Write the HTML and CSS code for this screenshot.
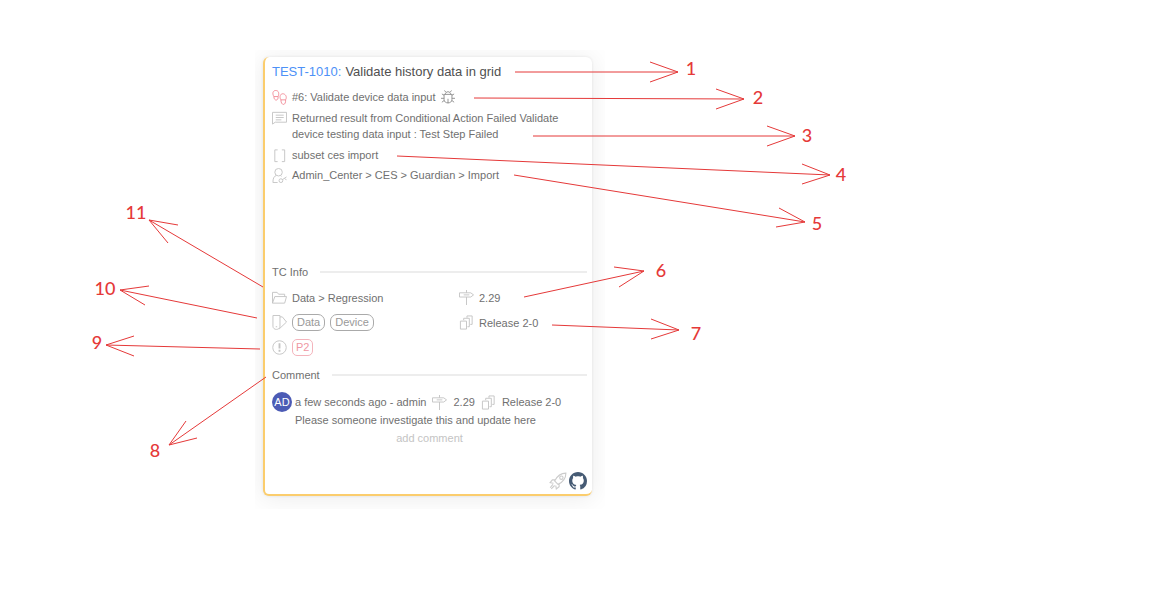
FILE: index.html
```html
<!DOCTYPE html>
<html lang="en">
<head>
<meta charset="utf-8">
<meta name="viewport" content="width=device-width, initial-scale=1">
<title>Test result card</title>
<link rel="stylesheet" href="styles.css">
</head>
<body>
<svg class="symbols" aria-hidden="true">
  <symbol id="sign" viewBox="0 0 16 16"><path d="M8 0v3M8 7.500V16M.5 3h12l3 2.200-3 2.300H.5z M5 5.200h6"/></symbol>
  <symbol id="copies" viewBox="0 0 16 16"><path d="M1.500 6.500h6.500v8.500h-6.500zM5 5.500v-2h6v9H9M8.500 3V1h5.500v9h-2"/></symbol>
</svg>
<main class="figure">
  <div class="stage">
    <article class="card">
      <h1 class="title"><a href="#test-1010">TEST-1010:</a><span>Validate history data in grid</span></h1>
      <section class="details">
        <div class="row">
          <svg class="icon danger" viewBox="0 0 16 16"><path d="M2 7C0 3.500 1 .5 4 .5s4 3 2.500 6.500zM2 7c0 5 5 5 4.500 0M9.500 10.500C7.500 7 9 4 11.500 4s5 3 3 6.500zM9.500 10.500c0 6.500 5.500 6.500 5 0"/></svg>
          <span>#6: Validate device data input</span>
          <svg class="icon bug" viewBox="0 0 16 16"><path d="M3.500 5h9v6c0 5-9 5-9 0zM5 5c0-4 6-4 6 0M5.500 2.500L4 .5M10.500 2.500L12 .5M8 10v5M3.500 6L1 4.500M12.500 6L15 4.500M3.500 9.500H0M12.500 9.500H16M3.500 12L1 14M12.500 12l2.500 2"/></svg>
        </div>
        <div class="row message">
          <svg class="icon" viewBox="0 0 16 16"><path d="M.5 2.500h15v10.500H3.500L.5 15zM4 5.500h8.500M4 8h8.500M4 10.500h6"/></svg>
          <p>Returned result from Conditional Action Failed Validate device testing data input : Test Step Failed</p>
        </div>
        <div class="row">
          <svg class="icon" viewBox="0 0 16 16"><path d="M6 2H3v12.500h3M10.500 2h3v12.500h-3"/></svg>
          <span>subset ces import</span>
        </div>
        <div class="row">
          <svg class="icon" viewBox="0 0 16 16"><circle cx="7" cy="4.500" r="4"/><path d="M4.500 8C2 9 1 11 1 15.500h5M9 8l1 1"/><circle cx="9.500" cy="13.500" r="2"/><path d="M11 12.500l4.500-3M13.500 11l2 2"/></svg>
          <span>Admin_Center &gt; CES &gt; Guardian &gt; Import</span>
        </div>
      </section>
      <h2 class="heading">TC Info</h2>
      <section class="info">
        <div class="column">
          <div class="row">
            <svg class="icon" viewBox="0 0 16 16"><path d="M.5 14V2.500h5l1.500 2h6.500V7M.5 14L3 7h12.500l-2 7z"/></svg>
            <span>Data &gt; Regression</span>
          </div>
          <div class="row">
            <svg class="icon" viewBox="0 0 16 16"><path d="M1 .5h7.500V12c0 4.500-7.500 4.500-7.500 0zM8.500 2h2.500l4.500 5.500-8 7.500M4 12.500h1.500"/></svg>
            <span class="tag">Data</span><span class="tag">Device</span>
          </div>
          <div class="row">
            <svg class="icon strong" viewBox="0 0 16 16"><circle cx="8" cy="8" r="7.200"/><path class="mark" d="M8 3.500v5.500M8 10.500v2"/></svg>
            <span class="tag priority">P2</span>
          </div>
        </div>
        <div class="column">
          <div class="row"><svg class="icon"><use href="#sign"/></svg><span>2.29</span></div>
          <div class="row"><svg class="icon"><use href="#copies"/></svg><span>Release 2-0</span></div>
        </div>
      </section>
      <h2 class="heading">Comment</h2>
      <section class="comment">
        <span class="avatar">AD</span>
        <div class="body">
          <div class="meta"><span>a few seconds ago - admin</span><svg class="icon"><use href="#sign"/></svg><span>2.29</span><svg class="icon"><use href="#copies"/></svg><span>Release 2-0</span></div>
          <p>Please someone investigate this and update here</p>
        </div>
      </section>
      <button class="add" type="button">add comment</button>
      <footer class="actions">
        <button type="button" aria-label="Run"><svg class="rocket" viewBox="0 0 16 16"><path d="M5 8c2-4 5-7 10-7 0 5-3 8-7 10zM5.500 7H3L1 9.500l3 .5M9 10.500V13l-2.500 2L6 12M3.500 11L1 14M5 12l-3 3"/><circle cx="11" cy="5" r="1.500"/></svg></button>
        <button type="button" aria-label="GitHub"><svg class="github" viewBox="0 0 16 16"><path d="M8 0C3.580 0 0 3.580 0 8c0 3.540 2.290 6.530 5.470 7.590.4.070.55-.17.55-.38 0-.19-.01-.82-.01-1.490-2.010.37-2.530-.49-2.690-.94-.09-.23-.48-.94-.82-1.130-.28-.15-.68-.52-.01-.53.63-.01 1.080.58 1.230.82.72 1.210 1.870.87 2.330.66.07-.52.28-.87.51-1.070-1.780-.2-3.640-.89-3.640-3.950 0-.87.31-1.590.82-2.150-.08-.2-.36-1.020.08-2.120 0 0 .67-.21 2.200.82.64-.18 1.320-.27 2-.27s1.360.09 2 .27c1.530-1.040 2.200-.82 2.200-.82.44 1.100.16 1.920.08 2.120.51.56.82 1.270.82 2.150 0 3.070-1.870 3.750-3.650 3.950.29.25.54.73.54 1.480 0 1.070-.01 1.930-.01 2.200 0 .21.15.46.55.38A8 8 0 0 0 16 8c0-4.420-3.580-8-8-8z"/></svg></button>
      </footer>
    </article>
  </div>
  <svg class="callouts" viewBox="0 0 1172 589">
    <path d="M515 72H678M650 62l28 10-28 10M474 98L744 99M716 89l28 10-28 10M533 136H795M767 126l28 10-28 10M397 156L830 175M802 164l28 11-28 9M514 175L805 222M779 208l26 14-29 5M524 297L644 271M614 267l30 4-25 16M552 325L679 330M651 319l28 11-28 9M266 377L169 445M186 421l-17 24 28-7M260 349L106 345M134 336l-28 9 28 11M257 318L120 290M149 286l-29 4 25 15M263 287L149 220M178 225l-29-5 19 23"/>
    <g>
      <text x="691" y="75">1</text><text x="758" y="104">2</text><text x="807" y="142">3</text><text x="841" y="181">4</text><text x="817" y="230">5</text><text x="661" y="277">6</text><text x="696" y="340">7</text><text x="155" y="457">8</text><text x="97" y="349">9</text><text x="105" y="295">10</text><text x="136" y="219">11</text>
    </g>
  </svg>
</main>
</body>
</html>
```
FILE: styles.css
```css
* { box-sizing: border-box; }
body {
  margin: 0;
  background: #fff;
  color: #707070;
  font: 11px/16px "Liberation Sans", Arial, sans-serif;
}
h1, h2, p { margin: 0; font-size: 11px; font-weight: 400; }
button { padding: 0; border: 0; background: none; color: inherit; font: inherit; cursor: pointer; }
.symbols { display: none; }
.figure { position: relative; padding: 50px 0 0 255px; }
.stage { max-width: 350px; padding: 7px 13px 13px 8px; overflow: hidden; }
.card {
  display: flex;
  flex-direction: column;
  padding: 0 5px 4px 7px;
  border-left: 2px solid #fbcd6d;
  border-bottom: 2px solid #fbcd6d;
  border-radius: 6px;
  background: #fff;
  box-shadow: 0 2px 24px 2px rgba(0, 0, 0, .07), 0 0 3px rgba(0, 0, 0, .09);
}
.title { display: flex; gap: 4px; font-size: 13px; line-height: 30px; color: #505050; }
.title a { color: #4d91f7; text-decoration: none; }
.details { min-height: 175px; }
.row { display: flex; align-items: center; gap: 5px; min-height: 20px; }
.icon { flex: none; width: 15px; height: 15px; fill: none; stroke: #c4c4c4; stroke-width: 1; }
.danger { stroke: #f28d99; }
.bug { width: 14px; height: 14px; stroke: #888; }
.strong { stroke: #c4c4c4; }
.strong .mark { stroke-width: 2; }
.message { align-items: flex-start; padding: 3px 0; }
.heading { display: flex; align-items: center; gap: 12px; line-height: 20px; }
.heading::after { content: ""; flex: 1; height: 2px; background: #ededed; }
.info { display: grid; grid-template-columns: 187px 1fr; padding: 3px 0 5px; }
.column { display: flex; flex-direction: column; }
.column .row { min-height: 25px; }
.tag { padding: 0 4px; border: 1px solid #aaa; border-radius: 7px; line-height: 15px; color: #999; }
.priority { padding: 0 3px; border-color: #f4b4bc; border-radius: 5px; color: #ef97a3; }
.comment { display: flex; gap: 3px; padding-top: 7px; }
.avatar { flex: none; width: 20px; height: 20px; border-radius: 50%; background: #4c5bb5; color: #fff; line-height: 20px; text-align: center; }
.meta { display: flex; align-items: center; gap: 6px; min-height: 20px; }
.add { align-self: center; line-height: 20px; color: #c4c4c4; }
.actions { display: flex; justify-content: flex-end; gap: 2px; padding-top: 24px; }
.actions svg { display: block; width: 18px; height: 18px; }
.rocket { fill: none; stroke: #ccc; }
.github { fill: #465b74; }
.callouts { position: absolute; left: 0; top: 0; width: 1172px; height: 589px; pointer-events: none; }
.callouts path { fill: none; stroke: #e53939; stroke-width: 1; }
.callouts text { fill: #e53939; font: 500 18px Lato, sans-serif; text-anchor: middle; }
```
